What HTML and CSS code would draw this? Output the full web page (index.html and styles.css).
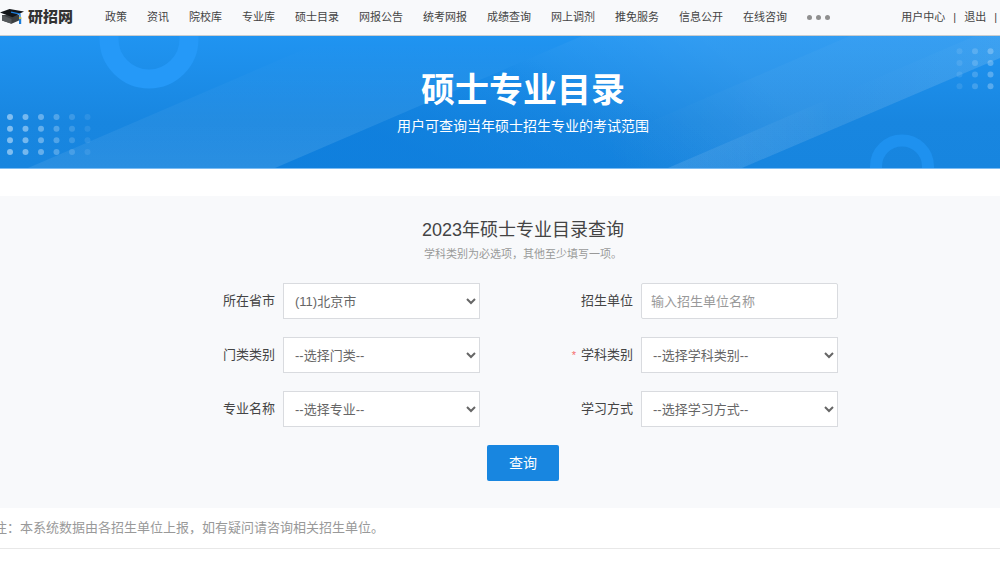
FILE: index.html
```html
<!DOCTYPE html>
<html lang="zh-CN">
<head>
<meta charset="utf-8">
<title>硕士专业目录</title>
<link rel="stylesheet" href="styles.css">
</head>
<body>
<header class="topbar">
  <a class="logo" href="#">
    <svg class="logo-mark" viewBox="0 0 24 18" aria-hidden="true">
      <path d="M2 7v5.500l9.500 3.200 7.500-3.200V7z" fill="#3b3f42"/>
      <path d="M2 7l9.500 4v4.700L2 12.500z" fill="#54585b"/>
      <path d="M0 4.500 9.500 1 24 3.500 12.500 9.300z" fill="#121518"/>
      <path d="M11 4.200 20 6v9" fill="none" stroke="#1b7ddb" stroke-width="1.300"/>
      <path d="M19 9.500h2.200V16H19z" fill="#1b7ddb"/>
      <path d="M19 9h2.200v2H19z" fill="#c8bb4a"/>
    </svg>
    <span class="logo-text">研招网</span>
  </a>
  <nav class="nav">
    <a href="#">政策</a>
    <a href="#">资讯</a>
    <a href="#">院校库</a>
    <a href="#">专业库</a>
    <a href="#">硕士目录</a>
    <a href="#">网报公告</a>
    <a href="#">统考网报</a>
    <a href="#">成绩查询</a>
    <a href="#">网上调剂</a>
    <a href="#">推免服务</a>
    <a href="#">信息公开</a>
    <a href="#">在线咨询</a>
    <button class="more" type="button" aria-label="更多"><i></i><i></i><i></i></button>
  </nav>
  <div class="account">
    <a href="#">用户中心</a><span>|</span><a href="#">退出</a><span>|</span>
  </div>
</header>

<section class="banner">
  <svg class="banner-art" viewBox="0 0 1000 132" preserveAspectRatio="xMidYMid slice" aria-hidden="true">
    <defs>
      <linearGradient id="base" x1="0" y1="0" x2="0" y2="1">
        <stop offset="0" stop-color="#2094f1"/><stop offset=".65" stop-color="#1886e0"/><stop offset="1" stop-color="#1785df"/>
      </linearGradient>
      <linearGradient id="beamA" x1="0" y1="0" x2="0" y2="1">
        <stop offset=".05" stop-color="#fff" stop-opacity="0"/><stop offset="1" stop-color="#fff" stop-opacity=".08"/>
      </linearGradient>
      <linearGradient id="shade" gradientUnits="userSpaceOnUse" x1="460" y1="132" x2="510" y2="12">
        <stop offset="0" stop-color="#0b7cdc" stop-opacity=".6"/><stop offset="1" stop-color="#0b7cdc" stop-opacity="0"/>
      </linearGradient>
      <linearGradient id="wash" gradientUnits="userSpaceOnUse" x1="610" y1="120" x2="700" y2="0">
        <stop offset="0" stop-color="#fff" stop-opacity="0"/><stop offset="1" stop-color="#fff" stop-opacity=".08"/>
      </linearGradient>
      <linearGradient id="beamB" gradientUnits="userSpaceOnUse" x1="600" y1="0" x2="760" y2="0">
        <stop offset="0" stop-color="#fff" stop-opacity="0"/><stop offset="1" stop-color="#fff" stop-opacity=".025"/>
      </linearGradient>
      <linearGradient id="beamC" gradientUnits="userSpaceOnUse" x1="668" y1="0" x2="1000" y2="0">
        <stop offset="0" stop-color="#fff" stop-opacity=".11"/><stop offset=".5" stop-color="#fff" stop-opacity="0"/><stop offset="1" stop-color="#fff" stop-opacity=".03"/>
      </linearGradient>
      <g id="dot-column">
        <circle r="3"/><circle cy="11.700" r="3"/><circle cy="23.300" r="3"/><circle cy="35" r="3"/>
      </g>
    </defs>
    <rect width="1000" height="132" fill="url(#base)"/>
    <path d="M275 132 582 0H1000V22L742 132z" fill="url(#shade)"/>
    <path d="M28 132 335 0H582L275 132z" fill="url(#beamA)"/>
    <path d="M275 132 582 0H1000V22L742 132z" fill="url(#wash)"/>
    <path d="M543 132 850 0H1000V22L742 132z" fill="url(#beamB)"/>
    <path d="M668 132 975 0H1000V22L742 132z" fill="url(#beamC)"/>
    <circle cx="149" cy="3" r="40" fill="none" stroke="#2599f8" stroke-width="19"/>
    <circle cx="902" cy="130.500" r="26" fill="none" stroke="#1e91ef" stroke-width="12"/>
    <g fill="#b8dcfa">
      <use href="#dot-column" x="10" y="81" opacity=".65"/>
      <use href="#dot-column" x="25.500" y="81" opacity=".58"/>
      <use href="#dot-column" x="41" y="81" opacity=".48"/>
      <use href="#dot-column" x="56.500" y="81" opacity=".35"/>
      <use href="#dot-column" x="72" y="81" opacity=".22"/>
      <use href="#dot-column" x="87.500" y="81" opacity=".12"/>
      <use href="#dot-column" x="959.500" y="15.300" opacity=".14"/>
      <use href="#dot-column" x="975" y="15.300" opacity=".25"/>
      <use href="#dot-column" x="990.500" y="15.300" opacity=".38"/>
    </g>
  </svg>
  <h1 class="banner-title">硕士专业目录</h1>
  <p class="banner-sub">用户可查询当年硕士招生专业的考试范围</p>
</section>

<main>
  <form class="search">
    <h2 class="search-title">2023年硕士专业目录查询</h2>
    <p class="search-hint">学科类别为必选项，其他至少填写一项。</p>
    <div class="fields">
      <div class="field">
        <label for="province">所在省市</label>
        <select id="province"><option>(11)北京市</option></select>
      </div>
      <div class="field">
        <label for="unit">招生单位</label>
        <input id="unit" type="text" placeholder="输入招生单位名称">
      </div>
      <div class="field">
        <label for="category">门类类别</label>
        <select id="category"><option>--选择门类--</option></select>
      </div>
      <div class="field">
        <label for="subject"><span class="required">*</span>学科类别</label>
        <select id="subject"><option>--选择学科类别--</option></select>
      </div>
      <div class="field">
        <label for="major">专业名称</label>
        <select id="major"><option>--选择专业--</option></select>
      </div>
      <div class="field">
        <label for="mode">学习方式</label>
        <select id="mode"><option>--选择学习方式--</option></select>
      </div>
    </div>
    <button class="submit" type="submit">查询</button>
  </form>
  <p class="note">注：本系统数据由各招生单位上报，如有疑问请咨询相关招生单位。</p>
</main>
</body>
</html>
```
FILE: styles.css
```css
* {
  box-sizing: border-box;
}

body {
  margin: 0;
  background: #fff;
  color: #444;
  font-family: "Liberation Sans", "Noto Sans CJK SC", sans-serif;
  font-size: 13px;
  overflow-x: hidden;
}

h1, h2, p {
  margin: 0;
  font-weight: 400;
}

a {
  color: inherit;
  text-decoration: none;
}

.topbar {
  display: flex;
  align-items: center;
  height: 36px;
  padding-bottom: 2px;
  background: #f8f9fb;
  border-bottom: 1px solid #c9cdd0;
  font-size: 11px;
  line-height: 16px;
  white-space: nowrap;
}

.logo {
  display: flex;
  align-items: center;
  gap: 4px;
  width: 105px;
}

.logo-mark {
  width: 24px;
  height: 18px;
}

.logo-text {
  color: #333;
  font-size: 15px;
  font-weight: 900;
}

.nav {
  display: flex;
  align-items: center;
  gap: 20px;
}

.more {
  display: flex;
  gap: 4px;
  padding: 2px 0 0;
  border: 0;
  background: none;
}

.more i {
  width: 5px;
  height: 5px;
  border-radius: 50%;
  background: #8f8f8f;
}

.account {
  display: flex;
  align-items: baseline;
  gap: 8px;
  margin-left: auto;
  padding-right: 3px;
}

.banner {
  position: relative;
  padding: 29px 0 31px 46px;
  overflow: hidden;
  border-bottom: 1px solid #7cbcf3;
  color: #fff;
  text-align: center;
}

.banner-art {
  position: absolute;
  inset: 0;
  width: 100%;
  height: 100%;
}

.banner-title {
  position: relative;
  font-size: 34px;
  font-weight: 700;
  line-height: 50px;
}

.banner-sub {
  position: relative;
  font-size: 14px;
  line-height: 22px;
}

.search {
  display: flex;
  flex-direction: column;
  align-items: center;
  margin-top: 27px;
  padding: 20px 0 27px 46px;
  background: #f8f9fb;
}

.search-title {
  font-size: 18px;
  line-height: 28px;
}

.search-hint {
  color: #999;
  font-size: 11px;
  line-height: 20px;
}

.fields {
  display: grid;
  grid-template-columns: auto auto;
  gap: 18px 86px;
  margin: 19px 0 18px;
}

.field {
  display: flex;
  align-items: center;
  gap: 8px;
}

.field label {
  width: 67px;
  padding-bottom: 3px;
  text-align: right;
}

.required {
  margin-right: 5px;
  color: #f56c6c;
  font-size: 11px;
}

.field select,
.field input {
  width: 197px;
  height: 36px;
  border: 1px solid #d9dbdf;
  border-radius: 0;
  background: #fff;
  color: #666;
  font: inherit;
}

.field select {
  padding: 0 0 0 7px;
}

.field input {
  padding: 0 9px;
  border-radius: 2px;
}

.field input::placeholder {
  color: #999;
}

.submit {
  width: 72px;
  height: 36px;
  padding: 0 0 3px;
  border: 0;
  border-radius: 2px;
  background: #1886e0;
  color: #fff;
  font: inherit;
  font-size: 14px;
}

.note {
  margin-left: -6px;
  padding: 10px 0;
  border-bottom: 1px solid #e8e8e8;
  color: #999;
  line-height: 20px;
}
```
